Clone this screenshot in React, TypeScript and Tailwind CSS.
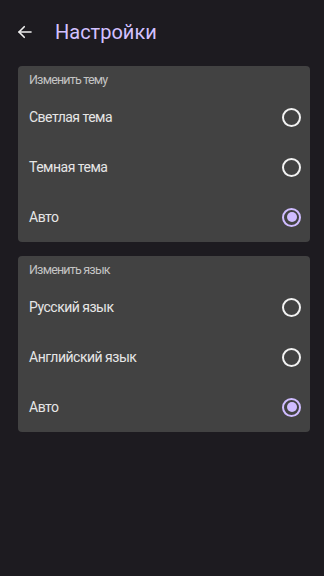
import { useState } from 'react';

type Option = { id: string; label: string };

function Radio({ checked }: { checked: boolean }) {
  return (
    <span
      className={`flex items-center justify-center w-[19px] h-[19px] rounded-full border-2 ${
        checked ? 'border-[#cfbcff]' : 'border-[#f2f2f2]'
      }`}
    >
      {checked && <span className="w-[10px] h-[10px] rounded-full bg-[#cfbcff]" />}
    </span>
  );
}

function Section({
  title,
  options,
  value,
  onChange,
}: {
  title: string;
  options: Option[];
  value: string;
  onChange: (id: string) => void;
}) {
  return (
    <div className="bg-[#424242] rounded-[4px] mx-[18px] w-[292px]">
      <p className="pt-[4px] pb-[2px] px-[11px] text-[12.5px] leading-[20px] tracking-[-0.8px] text-[#c4c4c4]">{title}</p>
      {options.map((o) => (
        <button
          key={o.id}
          onClick={() => onChange(o.id)}
          className="w-full h-[50px] flex items-center justify-between pl-[11px] pr-[9px] text-left"
        >
          <span className="text-[14px] tracking-[-0.5px] text-[#e6e6e6]">{o.label}</span>
          <Radio checked={value === o.id} />
        </button>
      ))}
    </div>
  );
}

export default function App() {
  const [theme, setTheme] = useState('auto');
  const [lang, setLang] = useState('auto');

  return (
    <div
      className="w-[324px] h-[576px] bg-[#1d1b20] overflow-hidden"
      style={{ fontFamily: 'Roboto, "Noto Sans", sans-serif' }}
    >
      {/* Header */}
      <div className="h-[64px] flex items-center">
        <button className="ml-[15px] w-[20px] h-[20px] flex items-center justify-center text-[#f0f0f0]">
          <svg width="18" height="18" viewBox="0 0 24 24" fill="none" stroke="currentColor" strokeWidth="2.2" strokeLinecap="round" strokeLinejoin="round">
            <path d="M20 12H4" />
            <path d="M11 5l-7 7 7 7" />
          </svg>
        </button>
        <h1 className="ml-[20px] text-[20px] text-[#d3c1ff] tracking-[0px]">Настройки</h1>
      </div>

      <div className="mt-[2px] flex flex-col gap-[14px]">
        <Section
          title="Изменить тему"
          value={theme}
          onChange={setTheme}
          options={[
            { id: 'light', label: 'Светлая тема' },
            { id: 'dark', label: 'Темная тема' },
            { id: 'auto', label: 'Авто' },
          ]}
        />
        <Section
          title="Изменить язык"
          value={lang}
          onChange={setLang}
          options={[
            { id: 'ru', label: 'Русский язык' },
            { id: 'en', label: 'Английский язык' },
            { id: 'auto', label: 'Авто' },
          ]}
        />
      </div>
    </div>
  );
}
